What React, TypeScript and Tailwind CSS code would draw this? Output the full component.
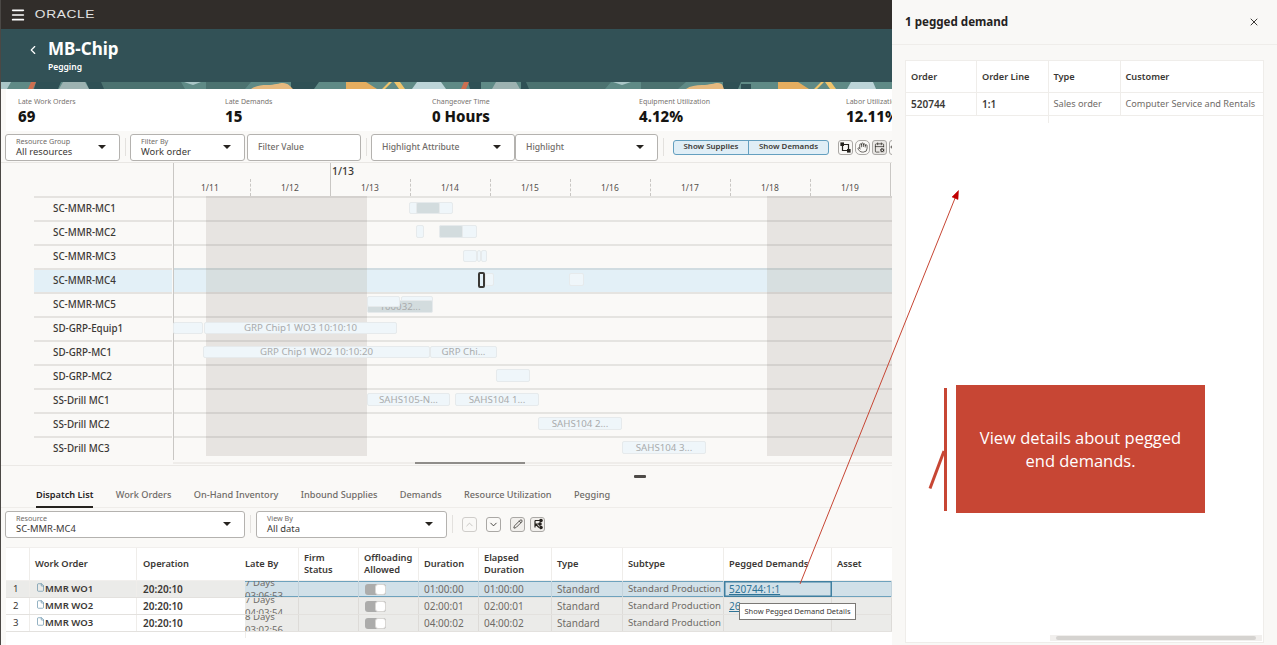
import React from 'react';
import { CalendarCog, ChevronDown, ChevronLeft, ChevronUp, File, Hand, Menu, Pencil, X } from 'lucide-react';

const font = 'font-["Noto_Sans","Open_Sans",sans-serif]';

const days = [
  { label: '1/11', w: 'w-[77px] pl-[27px]', tick: 'border-dashed' },
  { label: '1/12', w: 'w-[80px] pl-[30px]', tick: 'border-solid' },
  { label: '1/13', w: 'w-[80px] pl-[30px]', tick: 'border-dashed' },
  { label: '1/14', w: 'w-[80px] pl-[30px]', tick: 'border-dashed' },
  { label: '1/15', w: 'w-[80px] pl-[30px]', tick: 'border-dashed' },
  { label: '1/16', w: 'w-[80px] pl-[30px]', tick: 'border-dashed' },
  { label: '1/17', w: 'w-[80px] pl-[30px]', tick: 'border-dashed' },
  { label: '1/18', w: 'w-[80px] pl-[30px]', tick: 'border-dashed' },
  { label: '1/19', w: 'w-[80px] pl-[30px]', tick: 'border-solid' },
];

type Bar = { x: number; w: number; y: number; h: number; text?: string; dark?: boolean };

const rows: { name: string; bars: Bar[]; selected?: boolean }[] = [
  { name: 'SC-MMR-MC1', bars: [{ x: 235, w: 44, y: 6, h: 12 }, { x: 242, w: 24, y: 6, h: 12, dark: true }] },
  { name: 'SC-MMR-MC2', bars: [{ x: 242, w: 8, y: 5, h: 13 }, { x: 265, w: 38, y: 5, h: 13 }, { x: 265, w: 24, y: 5, h: 13, dark: true }] },
  { name: 'SC-MMR-MC3', bars: [{ x: 289, w: 14, y: 6, h: 12 }, { x: 303, w: 4, y: 6, h: 12 }, { x: 307, w: 6, y: 6, h: 12 }] },
  { name: 'SC-MMR-MC4', selected: true, bars: [{ x: 311, w: 9, y: 5, h: 13 }, { x: 395, w: 15, y: 5, h: 13 }] },
  { name: 'SC-MMR-MC5', bars: [{ x: 227, w: 32, y: 4, h: 9 }, { x: 193, w: 66, y: 8, h: 13, text: '100032...', dark: true }, { x: 193, w: 33, y: 4, h: 11 }] },
  { name: 'SD-GRP-Equip1', bars: [{ x: -1, w: 30, y: 6, h: 12 }, { x: 30, w: 193, y: 6, h: 12, text: 'GRP Chip1 WO3 10:10:10' }] },
  { name: 'SD-GRP-MC1', bars: [{ x: 29, w: 227, y: 6, h: 12, text: 'GRP Chip1 WO2 10:10:20' }, { x: 256, w: 67, y: 6, h: 12, text: 'GRP Chi...' }] },
  { name: 'SD-GRP-MC2', bars: [{ x: 322, w: 34, y: 5, h: 13 }] },
  { name: 'SS-Drill MC1', bars: [{ x: 193, w: 83, y: 5, h: 13, text: 'SAHS105-N...' }, { x: 281, w: 84, y: 5, h: 13, text: 'SAHS104 1...' }] },
  { name: 'SS-Drill MC2', bars: [{ x: 364, w: 84, y: 5, h: 13, text: 'SAHS104 2...' }] },
  { name: 'SS-Drill MC3', bars: [{ x: 448, w: 84, y: 5, h: 13, text: 'SAHS104 3...' }] },
];

const tabs = ['Dispatch List', 'Work Orders', 'On-Hand Inventory', 'Inbound Supplies', 'Demands', 'Resource Utilization', 'Pegging'];

const dispatch = [
  { n: 1, wo: 'MMR WO1', late: ['7 Days', '03:06:53'], dur: '01:00:00', el: '01:00:00' },
  { n: 2, wo: 'MMR WO2', late: ['7 Days', '04:03:54'], dur: '02:00:01', el: '02:00:01' },
  { n: 3, wo: 'MMR WO3', late: ['8 Days', '03:02:56'], dur: '04:00:02', el: '04:00:02' },
];

const grid = 'grid grid-cols-[24px_107px_108px_54px_60px_60px_60px_73px_71px_101px_108px_60px]';

const Field: React.FC<{ label?: string; value?: string; placeholder?: string; caret?: boolean; className: string }> = ({ label, value, placeholder, caret = true, className }) => (
  <div className={`flex items-center justify-between shrink-0 h-[27px] bg-white border border-[#b4b2af] rounded-[3px] pl-[10px] pr-[13px] ${className}`}>
    {placeholder ? (
      <span className="text-[8.6px] font-medium text-[#6f6b67]">{placeholder}</span>
    ) : (
      <div className="flex flex-col">
        <span className="text-[7.2px] leading-[9px] text-[#6f6b67]">{label}</span>
        <span className="text-[9.4px] leading-[11px] text-[#3b3835]">{value}</span>
      </div>
    )}
    {caret && <span className="w-0 h-0 border-x-[4px] border-x-transparent border-t-[4px] border-t-[#26231f]" />}
  </div>
);

const IconBox: React.FC<{ children: React.ReactNode; className?: string }> = ({ children, className = '' }) => (
  <div className={`flex items-center justify-center shrink-0 w-[15px] h-[15px] border border-[#aaa8a5] rounded-[3px] text-[#26231f] ${className}`}>{children}</div>
);

export default function App() {
  return (
    <div className={`relative flex w-[1277px] h-[645px] overflow-hidden bg-[#f9f8f6] ${font}`}>
      {/* Main page */}
      <div className="flex flex-col w-[892px] h-full shrink-0 overflow-hidden border-l border-[#4b4845] bg-[#faf9f7]">
        <div className="flex items-center h-[29px] shrink-0 bg-[#312d2a] pl-[9px]">
          <Menu size={16} strokeWidth={2.5} className="text-white" />
          <span className="ml-[9px] w-[60px] text-center text-[11px] font-['Liberation_Sans',sans-serif] tracking-[0.5px] text-[#e4e4e4] scale-x-[1.25]">ORACLE</span>
        </div>

        <div className="flex items-start h-[53px] shrink-0 bg-[#325156] pl-[25px] pt-[9px] text-white">
          <ChevronLeft size={14} strokeWidth={2} className="mt-[5px]" />
          <div className="ml-[8px]">
            <div className="text-[17px] leading-[22px] font-bold">MB-Chip</div>
            <div className="text-[8.5px] leading-[12px] mt-[1px] font-semibold">Pegging</div>
          </div>
        </div>

        {/* Banner strip */}
        <svg width="891" height="7" className="block shrink-0" viewBox="0 0 891 7">
          <rect width="891" height="7" fill="#5f8a86" />
          <path d="M100 0h80l4 7h-84z M205 0h45l-6 7h-39z M520 0h90l-6 7h-84z M640 0h45l-8 7h-37z" fill="#4c7270" />
          <path d="M35 0h25l-3 7H33z M85 0h15l3 7H88z M290 0h28l-5 7h-23z M467 0h13v7h-11z M520 0h5l3 7h-8z M722 0h18l-3 7h-15z M740 2h10v5h-10z" fill="#2f5055" />
          <path d="M0 0h10l-4 7H0z M183 0h17l-8 3z M612 0h18l-9 3z" fill="#aac6c7" />
          <path d="M62 0h22l4 7H58z M495 0h20l4 7h-28z" fill="#9db2b1" />
          <path d="M416 0h24l5 7h-34z M850 0h22l3 7h-29z" fill="#bcd4d8" />
          <path d="M30 0h5l-3 7h-5z M463 0h5l-3 7h-5z" fill="#cd6f50" />
          <path d="M250 7c4-3 10-4 16-4 8 0 12-2 16-2 5 0 8 4 10 6z M685 7c4-3 10-4 16-4 8 0 12-2 16-2 5 0 5 4 6 6z" fill="#e6b97f" />
          <path d="M345 0h20l11 7h-31z M777 0h20l11 7h-31z" fill="#e5ad5f" />
          <path d="M388 0h3l-7 7h-3z M393 0h6l5 7h-6z M820 0h3l-7 7h-3z M824 0h6l5 7h-6z" fill="#f0c46c" />
        </svg>

        {/* KPIs */}
        <div className="flex h-[42px] shrink-0 ml-[5px] bg-white pl-[12px] pt-[8px]">
          {[
            ['Late Work Orders', '69'],
            ['Late Demands', '15'],
            ['Changeover Time', '0 Hours'],
            ['Equipment Utilization', '4.12%'],
            ['Labor Utilization', '12.11%'],
          ].map(([label, value]) => (
            <div key={label} className="w-[207px] shrink-0">
              <div className="text-[7px] leading-[10px] text-[#77736f]">{label}</div>
              <div className="text-[15px] leading-[18px] font-extrabold text-[#161513]">{value}</div>
            </div>
          ))}
        </div>

        {/* Filter toolbar */}
        <div className="flex items-center h-[32px] shrink-0 pl-[4px] pt-[1px] border-b border-[#e9e7e4]">
          <Field label="Resource Group" value="All resources" className="w-[115px]" />
          <div className="w-px h-[18px] mx-[4.5px] shrink-0 bg-[#e3e1de]" />
          <Field label="Filter By" value="Work order" className="w-[115px]" />
          <Field placeholder="Filter Value" caret={false} className="w-[114px] ml-[2px]" />
          <div className="w-px h-[18px] mx-[4.5px] shrink-0 bg-[#e3e1de]" />
          <Field placeholder="Highlight Attribute" className="w-[144px]" />
          <Field placeholder="Highlight" className="w-[143px]" />
          <div className="w-px h-[18px] ml-[5px] mr-[9px] shrink-0 bg-[#e3e1de]" />
          <div className="flex h-[15px] w-[156px] shrink-0 bg-[#e0eef6] border border-[#649fbf] rounded-[3px] text-[7.9px] font-semibold text-[#3d3a36]">
            <div className="flex items-center justify-center w-[75px] border-r border-[#649fbf]">Show Supplies</div>
            <div className="flex items-center justify-center flex-1">Show Demands</div>
          </div>
          <div className="flex gap-[2px] ml-[9px] shrink-0">
            <IconBox>
              <svg width="11" height="11" viewBox="0 0 11 11" fill="none" stroke="currentColor" strokeWidth="1.2">
                <path d="M2.5 2.5 L8.5 2.5 L8.5 8.5 M2.5 2.5 L2.5 8.5 L8.5 8.5" />
                <rect x="1" y="1" width="2.4" height="2.4" fill="#26231f" />
                <rect x="7.6" y="7.6" width="2.4" height="2.4" fill="#26231f" />
              </svg>
            </IconBox>
            <IconBox className="rounded-[5px]"><Hand size={11} strokeWidth={1.5} /></IconBox>
            <IconBox className="bg-[#e9e7e4]"><CalendarCog size={11} strokeWidth={1.5} /></IconBox>
            <IconBox className="justify-start"><ChevronLeft size={10} strokeWidth={2} className="-ml-[3px] shrink-0" /></IconBox>
          </div>
        </div>

        {/* Gantt header */}
        <div className="flex flex-col h-[33px] shrink-0 pl-[172px]">
          <div className="flex h-[16px] border-l border-[#c9c7c4]">
            <div className="w-[157px] border-r border-[#c9c7c4]" />
            <span className="pl-[1px] text-[10.5px] leading-[16px] font-medium text-[#3b3835]">1/13</span>
            <div className="ml-auto mr-[1px] border-r border-[#c9c7c4]" />
          </div>
          <div className="flex h-[17px] border-l border-[#c9c7c4]">
            {days.map((d) => (
              <div key={d.label} className={`${d.w} shrink-0 border-r border-[#c9c7c4] ${d.tick} text-[8.5px] leading-[17px] text-[#55514d]`}>{d.label}</div>
            ))}
          </div>
        </div>

        {/* Gantt rows */}
        <div className="flex flex-col shrink-0">
          {rows.map((row, rowIndex) => {
            const shadeEnd = rowIndex === rows.length - 1 ? 'bottom-[4px]' : 'bottom-0';
            const shade = row.selected ? 'bg-[#d7dfe0]' : 'bg-[#e7e4e1]';
            return (
              <div key={row.name} className="flex h-[24px] pl-[33px]">
                <div className={`flex items-center w-[138px] pl-[19px] pt-[1px] border-t-2 border-[#e5e3e0] text-[9.8px] font-medium text-[#3b3835] ${row.selected ? 'bg-[#e3f0f7]' : ''}`}>{row.name}</div>
                <div className={`relative flex-1 border-l border-[#c9c7c4] ml-[1px] ${row.selected ? 'bg-[#e3f0f7]' : ''}`}>
                  <div className={`absolute left-[32px] top-0 w-[161px] ${shadeEnd} ${shade}`} />
                  <div className={`absolute left-[593px] top-0 w-[125px] ${shadeEnd} ${shade}`} />
                  <div className="absolute inset-x-0 top-0 h-[2px] bg-[#33302c]/10" />
                  {row.bars.map((b, i) => (
                    <div
                      key={i}
                      style={{ left: b.x, width: b.w, top: b.y, height: b.h }}
                      className={`absolute flex items-center justify-center overflow-hidden pt-[1px] rounded-[2px] border border-[#e6eaec] text-[9.7px] whitespace-nowrap text-[#a9abac] ${b.dark ? 'bg-[#d3dcde] text-[#9a9c9c]' : 'bg-[#eff6fa]'}`}
                    >
                      {b.text}
                    </div>
                  ))}
                  {row.selected && <div className="absolute left-[304px] top-[4px] w-[7px] h-[16px] rounded-[2px] border-2 border-[#3a3835]" />}
                </div>
              </div>
            );
          })}
        </div>

        {/* Gantt scrollbar */}
        <div className="flex h-[2px] mt-[2px] ml-[172px] shrink-0 bg-[#efedea]">
          <div className="ml-[242px] w-[110px] bg-[#8f8d8a]" />
        </div>
        <div className="flex justify-center shrink-0 h-[18px] mt-[1px] border-t border-[#ebe9e6]">
          <div className="mt-[9px] ml-[386px] w-[12px] h-[3px] rounded-[1px] bg-[#4e4b48]" />
        </div>

        {/* Tabs */}
        <div className="flex h-[25px] pl-[35px] gap-[22.3px] shrink-0 border-b border-[#efedea]">
          {tabs.map((t, i) => (
            <div key={t} className={`h-[25px] pt-[4px] text-[9.2px] leading-[16px] whitespace-nowrap ${i === 0 ? 'font-semibold text-[#26231f] border-b-2 border-[#26231f]' : 'font-medium text-[#6f6b67]'}`}>{t}</div>
          ))}
        </div>

        {/* Dispatch filters */}
        <div className="flex items-center h-[28px] mt-[2px] pl-[4px] shrink-0">
          <Field label="Resource" value="SC-MMR-MC4" className="w-[240px]" />
          <div className="w-px h-[18px] mx-[5px] shrink-0 bg-[#e3e1de]" />
          <Field label="View By" value="All data" className="w-[191px]" />
          <div className="w-px h-[18px] mx-[5px] shrink-0 bg-[#e3e1de]" />
          <div className="flex gap-[9px] ml-[4px]">
            <IconBox className="text-[#b5b3b0] border-[#cfcdca]"><ChevronUp size={11} strokeWidth={1.6} /></IconBox>
            <IconBox><ChevronDown size={11} strokeWidth={1.8} /></IconBox>
          </div>
          <div className="flex gap-[5px] ml-[9px]">
            <IconBox className="bg-[#f1efec]"><Pencil size={10} strokeWidth={1.8} /></IconBox>
            <IconBox className="bg-[#f1efec]">
              <svg width="12" height="12" viewBox="0 0 12 12" fill="none" stroke="currentColor" strokeWidth="1.2">
                <path d="M3 2.5v7 M3 6h3.5 M3 2.5h5 M7 9.5L3.5 6" />
                <circle cx="9" cy="2.5" r="1.2" fill="currentColor" />
                <circle cx="8" cy="6" r="1.2" fill="currentColor" />
                <circle cx="9" cy="9.5" r="1.2" fill="currentColor" />
              </svg>
            </IconBox>
          </div>
        </div>

        {/* Dispatch table */}
        <div className="flex-1 mt-[9px] ml-[5px] bg-white text-[9.6px]">
          <div className={`${grid} h-[34px] border-y border-[#f1efed] text-[9.3px] font-semibold text-[#3b3835] leading-[12px]`}>
            <div className="border-r border-[#efedea]" />
            <div className="flex items-center pl-[5px] border-r border-[#efedea]">Work Order</div>
            <div className="flex items-center pl-[6px]">Operation</div>
            <div className="flex items-center border-r border-[#efedea]">Late By</div>
            <div className="flex items-center pl-[5px] border-r border-[#efedea]">Firm<br />Status</div>
            <div className="flex items-center pl-[5px] border-r border-[#efedea]">Offloading<br />Allowed</div>
            <div className="flex items-center pl-[5px] border-r border-[#efedea]">Duration</div>
            <div className="flex items-center pl-[5px] border-r border-[#efedea]">Elapsed<br />Duration</div>
            <div className="flex items-center pl-[5px] border-r border-[#efedea]">Type</div>
            <div className="flex items-center pl-[5px] border-r border-[#efedea]">Subtype</div>
            <div className="flex items-center pl-[5px] border-r border-[#efedea]">Pegged Demands</div>
            <div className="flex items-center pl-[5px]">Asset</div>
          </div>
          {dispatch.map((r) => {
            const first = r.n === 1;
            const line = first ? 'border-[#c3d3dc] shadow-[inset_0_1px_0_#6ea2bd,inset_0_-1px_0_#6ea2bd]' : 'border-[#dddbd8]';
            const cell = `flex items-center overflow-hidden pl-[5px] border-r ${line}`;
            const frozen = first ? 'bg-[#ebebe9]' : 'bg-white';
            return (
              <div key={r.n} className={`${grid} h-[17px] border-b border-[#e3e1de] ${first ? 'bg-[#d1e0e8]' : 'bg-[#ebebe9]'} text-[#6f6b67]`}>
                <div className={`flex items-center pl-[7px] border-r border-[#efedea] text-[#3b3835] ${frozen}`}>{r.n}</div>
                <div className={`flex items-center pl-[6px] border-r border-[#efedea] text-[9.5px] font-semibold text-[#3b3835] ${frozen}`}>
                  <File size={9} strokeWidth={1.6} className="text-[#4d7f9c] -mt-[4px]" />{r.wo}
                </div>
                <div className={`flex items-center pl-[6px] text-[10px] font-semibold text-[#3b3835] ${frozen}`}>20:20:10</div>
                <div className={`flex items-center overflow-hidden border-r ${line}`}>
                  <div className="leading-[13px]">{r.late[0]}<br />{r.late[1]}</div>
                </div>
                <div className={cell} />
                <div className={cell}>
                  <div className="flex w-[21px] h-[11px] ml-[1px] rounded-[3px] overflow-hidden bg-[#acacab]">
                    <div className="ml-auto w-[11px] h-full rounded-[3px] bg-white border border-[#d8d6d3]" />
                  </div>
                </div>
                <div className={`${cell} text-[10px]`}>{r.dur}</div>
                <div className={`${cell} text-[10px]`}>{r.el}</div>
                <div className={`${cell} text-[10px]`}>Standard</div>
                <div className={`${cell} whitespace-nowrap`}>Standard Production</div>
                <div className={first ? 'flex items-center pl-[5px] text-[10px] text-[#2f7396] shadow-[inset_0_0_0_1.5px_#3f7fa0]' : `${cell} text-[10px] text-[#2f7396]`}>
                  {first && <span className="underline">520744:1:1</span>}
                  {r.n === 2 && <span className="underline">26</span>}
                </div>
                <div className={cell} />
              </div>
            );
          })}
          <div className="ml-[239px] w-px h-[6px] bg-[#efedea]" />
        </div>
      </div>

      {/* Pegged demand drawer */}
      <div className="flex flex-col flex-1 min-w-0 h-full">
        <div className="flex items-center justify-between h-[45px] shrink-0 pl-[13px] pr-[17px] border-b border-[#efedea]">
          <span className="text-[11.6px] font-bold text-[#26231f]">1 pegged demand</span>
          <X size={12} strokeWidth={1.8} className="text-[#26231f]" />
        </div>
        <div className="relative flex flex-col flex-1 mx-[13px] mt-[15px] mb-[2px] bg-white border border-[#efedea] text-[9.2px] text-[#3b3835]">
          <div className="grid grid-cols-[71px_71.5px_72px_1fr] h-[32px] border-b border-[#efedea] font-semibold">
            <div className="flex items-center pl-[5px] border-r border-[#efedea]">Order</div>
            <div className="flex items-center pl-[5px] border-r border-[#efedea]">Order Line</div>
            <div className="flex items-center pl-[5px] border-r border-[#efedea]">Type</div>
            <div className="flex items-center pl-[5px]">Customer</div>
          </div>
          <div className="grid grid-cols-[71px_71.5px_72px_1fr] h-[23px] border-b border-[#efedea]">
            <div className="flex items-center pl-[5px] border-r border-[#efedea] text-[10px] font-semibold">520744</div>
            <div className="flex items-center pl-[5px] border-r border-[#efedea] text-[10px] font-semibold">1:1</div>
            <div className="flex items-center pl-[5px] border-r border-[#efedea] text-[#6f6b67]">Sales order</div>
            <div className="flex items-center pl-[5px] text-[#6f6b67] whitespace-nowrap">Computer Service and Rentals</div>
          </div>
          <div className="ml-[142px] w-px h-[7px] bg-[#efedea]" />
          <div className="flex justify-end mt-auto mb-[1px] mr-[1px]">
            <div className="flex items-center w-[212px] h-[6px] bg-[#f1efed]">
              <div className="mx-[6px] flex-1 h-[4px] rounded-full bg-[#d5d3d0]" />
            </div>
          </div>
        </div>
      </div>

      {/* Callout over the page */}
      <div className="absolute left-[956px] top-[385px] flex items-center justify-center w-[249px] h-[128px] bg-[#c74634] px-[16px] text-center text-[16.5px] leading-[23px] text-white font-['Open_Sans',sans-serif]">
        View details about pegged end demands.
      </div>

      {/* Tooltip */}
      <div className="absolute left-[739px] top-[603px] flex items-center justify-center w-[117px] h-[17px] bg-white border border-[#7a7875] text-[7.5px] whitespace-nowrap text-[#3b3835]">
        Show Pegged Demand Details
      </div>

      {/* Callout leader and arrow */}
      <svg className="absolute inset-0 pointer-events-none" width="1277" height="645" viewBox="0 0 1277 645" fill="none">
        <path d="M800 584 L955.5 197" stroke="#c74634" strokeWidth="1" />
        <path d="M958.5 190.5 L952 197 L958 199.5 Z" fill="#c00000" stroke="#c00000" strokeWidth="0.5" />
        <path d="M945.5 388 V511" stroke="#c74634" strokeWidth="3" />
        <path d="M944 451 L930 488.5" stroke="#c74634" strokeWidth="3" />
      </svg>
    </div>
  );
}
